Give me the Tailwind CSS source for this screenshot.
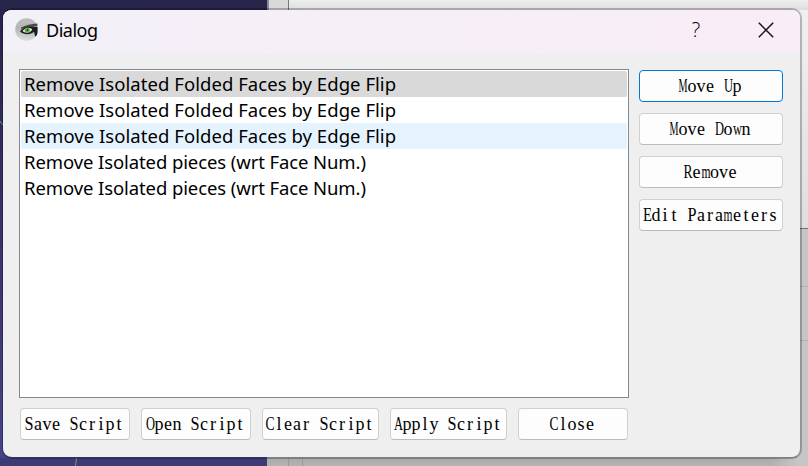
<!DOCTYPE html>
<html lang="en">
<head>
<meta charset="utf-8">
<title>Dialog</title>
<script src="https://cdn.jsdelivr.net/npm/@tailwindcss/browser@4"></script>
</head>
<body class="relative h-[466px] w-[808px] overflow-hidden bg-[#c4c4c4] text-black">
<!-- Application behind the dialog -->
<svg class="absolute inset-0" width="808" height="466" viewBox="0 0 808 466" fill="none">
  <defs>
    <linearGradient id="sky" x1="0" y1="0" x2="0" y2="1"><stop stop-color="#262449"/><stop offset="1" stop-color="#47438a"/></linearGradient>
    <linearGradient id="top" x1="0" y1="0" x2="0" y2="1"><stop stop-color="#eeeeee"/><stop offset="1" stop-color="#dddddd"/></linearGradient>
    <linearGradient id="right" x1="0" y1="0" x2="0" y2="1"><stop stop-color="#f0f0f0"/><stop offset="1" stop-color="#dedede"/></linearGradient>
    <linearGradient id="shade" x1="0" y1="0" x2="0" y2="1"><stop stop-color="#9d9d9d"/><stop offset="1" stop-color="#b4b4b4"/></linearGradient>
    <linearGradient id="fade" x1="0" y1="0" x2="1" y2="0"><stop stop-color="#c6c6c6" stop-opacity="0"/><stop offset="1" stop-color="#c6c6c6"/></linearGradient>
  </defs>
  <rect width="267" height="466" fill="url(#sky)"/>
  <rect y="458" width="267" height="8" fill="#3d3a75"/>
  <rect x="267" width="541" height="10" fill="url(#top)"/>
  <rect x="267" width="2" height="10" fill="#8c889c"/>
  <rect x="269" width="19" height="10" fill="#d9d9d9"/>
  <rect x="288" width="1" height="10" fill="#6d7888"/>
  <rect x="790" y="10" width="18" height="218" fill="url(#right)"/>
  <rect x="790" y="228" width="18" height="1" fill="#6f747c"/>
  <rect x="790" y="229" width="18" height="237" fill="#c6c6c6"/>
  <path d="M800 286.500h8M800 340.500h8" stroke="#b4b4b4"/>
  <rect x="267" y="450" width="530" height="16" fill="url(#shade)"/>
  <rect x="770" y="458" width="28" height="8" fill="url(#fade)"/>
  <path d="M288.500 458v8M302.500 458v8" stroke="#999"/>
  <path d="M76.500 458l-1 8M0 121l3 4" stroke="#73967f"/>
</svg>

<!-- Dialog window -->
<main class="absolute left-[2px] top-[8px] flex h-[451px] w-[800px] flex-col overflow-hidden rounded-[10px] border-2 border-l-1 border-black/25 bg-[#efefef] bg-clip-padding">
  <header class="flex h-[43px] shrink-0 items-center bg-linear-to-r from-[#f3f0f8] to-[#f9edf7] pb-[3px] pl-[12px]">
    <svg class="h-6 w-6" viewBox="0 0 24 24">
      <defs><linearGradient id="ball" x1=".5" y1="0" x2=".4" y2="1"><stop stop-color="#bdbdbd"/><stop offset=".5" stop-color="#b5b5b5"/><stop offset="1" stop-color="#dedede"/></linearGradient></defs>
      <circle cx="11.500" cy="11.500" r="11.300" fill="url(#ball)"/>
      <path d="M6 9.500C11 7 16 6 22.400 5.500L22.500 8C16 7.500 12 8.500 6 11Z" fill="#4a4a4a"/>
      <path d="M5 13.500C8 8.500 14 7 22.600 9L22.500 15C21.700 18 20.500 19.500 20 18L19 13.500C16 17 9 17 5 13.500Z" fill="#1c1c1c"/>
      <path d="M7.500 13C9.500 9.800 14.500 9 17.300 11.400C15 15.500 10 15.400 7.500 13Z" fill="#e4e9e1"/>
      <circle cx="12.300" cy="12.200" r="2.600" fill="#63b254"/>
      <circle cx="12.400" cy="12" r=".9" fill="#173d15"/>
    </svg>
    <h1 class="ml-[7px] font-['Noto_Sans','Open_Sans',sans-serif] text-[18px] leading-6 tracking-[-0.5px]">Dialog</h1>
    <span class="ml-auto w-[20px] text-center font-['Open_Sans','Noto_Sans',sans-serif] text-[20px] font-light leading-6">?</span>
    <svg class="ml-[52px] mr-[26px] h-4 w-4" viewBox="0 0 16 16" fill="none" stroke="#161316" stroke-width="1.500"><path d="M.8.8l14.400 14.400M15.200.8L.8 15.200"/></svg>
  </header>

  <div class="flex gap-[10px] pl-[16px] pt-4">
    <section class="flex w-[610px] flex-col gap-[10px]">
      <ul class="h-[329px] border border-[#828790] bg-white p-px font-['Noto_Sans','Open_Sans',sans-serif] text-[18.500px] leading-[26px] tracking-[0.050px] whitespace-nowrap">
        <li class="h-[26px] rounded-[2px] bg-[#d9d9d9] pl-[3px]">Remove Isolated Folded Faces by Edge Flip</li>
        <li class="h-[26px] rounded-[2px] pl-[3px]">Remove Isolated Folded Faces by Edge Flip</li>
        <li class="h-[26px] rounded-[2px] bg-[#e5f3ff] pl-[3px]">Remove Isolated Folded Faces by Edge Flip</li>
        <li class="h-[26px] rounded-[2px] pl-[3px] tracking-[-0.100px]">Remove Isolated pieces (wrt Face Num.)</li>
        <li class="h-[26px] rounded-[2px] pl-[3px] tracking-[-0.100px]">Remove Isolated pieces (wrt Face Num.)</li>
      </ul>
      <div class="flex gap-[11px] pl-px font-['Liberation_Serif',serif] text-[18px] leading-[30px] whitespace-pre">
        <button class="h-8 w-[110px] rounded-[4px] border border-[#d0d0d0] border-b-[#bcbcbc] bg-[#fdfdfd]">Save Script</button>
        <button class="h-8 w-[110px] rounded-[4px] border border-[#d0d0d0] border-b-[#bcbcbc] bg-[#fdfdfd]">Open Script</button>
        <button class="h-8 w-[117px] rounded-[4px] border border-[#d0d0d0] border-b-[#bcbcbc] bg-[#fdfdfd]">Clear Script</button>
        <button class="h-8 w-[117px] rounded-[4px] border border-[#d0d0d0] border-b-[#bcbcbc] bg-[#fdfdfd]">Apply Script</button>
        <button class="h-8 w-[110px] rounded-[4px] border border-[#d0d0d0] border-b-[#bcbcbc] bg-[#fdfdfd]">Close</button>
      </div>
    </section>
    <aside class="flex w-36 flex-col gap-[11px] pt-px font-['Liberation_Serif',serif] text-[18px] leading-[30px] whitespace-pre">
      <button class="h-8 rounded-[4px] border border-[#0078d4] bg-[#fdfdfd]">Move Up</button>
      <button class="h-8 rounded-[4px] border border-[#d0d0d0] border-b-[#bcbcbc] bg-[#fdfdfd]">Move Down</button>
      <button class="h-8 rounded-[4px] border border-[#d0d0d0] border-b-[#bcbcbc] bg-[#fdfdfd]">Remove</button>
      <button class="h-8 rounded-[4px] border border-[#d0d0d0] border-b-[#bcbcbc] bg-[#fdfdfd]">Edit Parameters</button>
    </aside>
  </div>
</main>
<script>
  // Set button captions in fixed 9px cells, condensing the wide serif letters to fit.
  const ctx = document.createElement('canvas').getContext('2d');
  ctx.font = "18px 'Liberation Serif'";
  for (const button of document.querySelectorAll('button')) {
    const caption = button.textContent;
    const line = document.createElement('span');
    line.className = 'inline-flex justify-center h-[30px] relative -left-px';
    for (const ch of caption) {
      const cell = document.createElement('span');
      cell.className = 'flex w-[9px] shrink-0 justify-center whitespace-pre';
      const glyph = document.createElement('span');
      glyph.className = 'block shrink-0';
      glyph.textContent = ch;
      const w = ctx.measureText(ch).width;
      if (w > 9) glyph.style.transform = `scaleX(${9 / w})`;
      cell.append(glyph);
      line.append(cell);
    }
    button.setAttribute('aria-label', caption);
    button.replaceChildren(line);
  }
</script>
</body>
</html>
